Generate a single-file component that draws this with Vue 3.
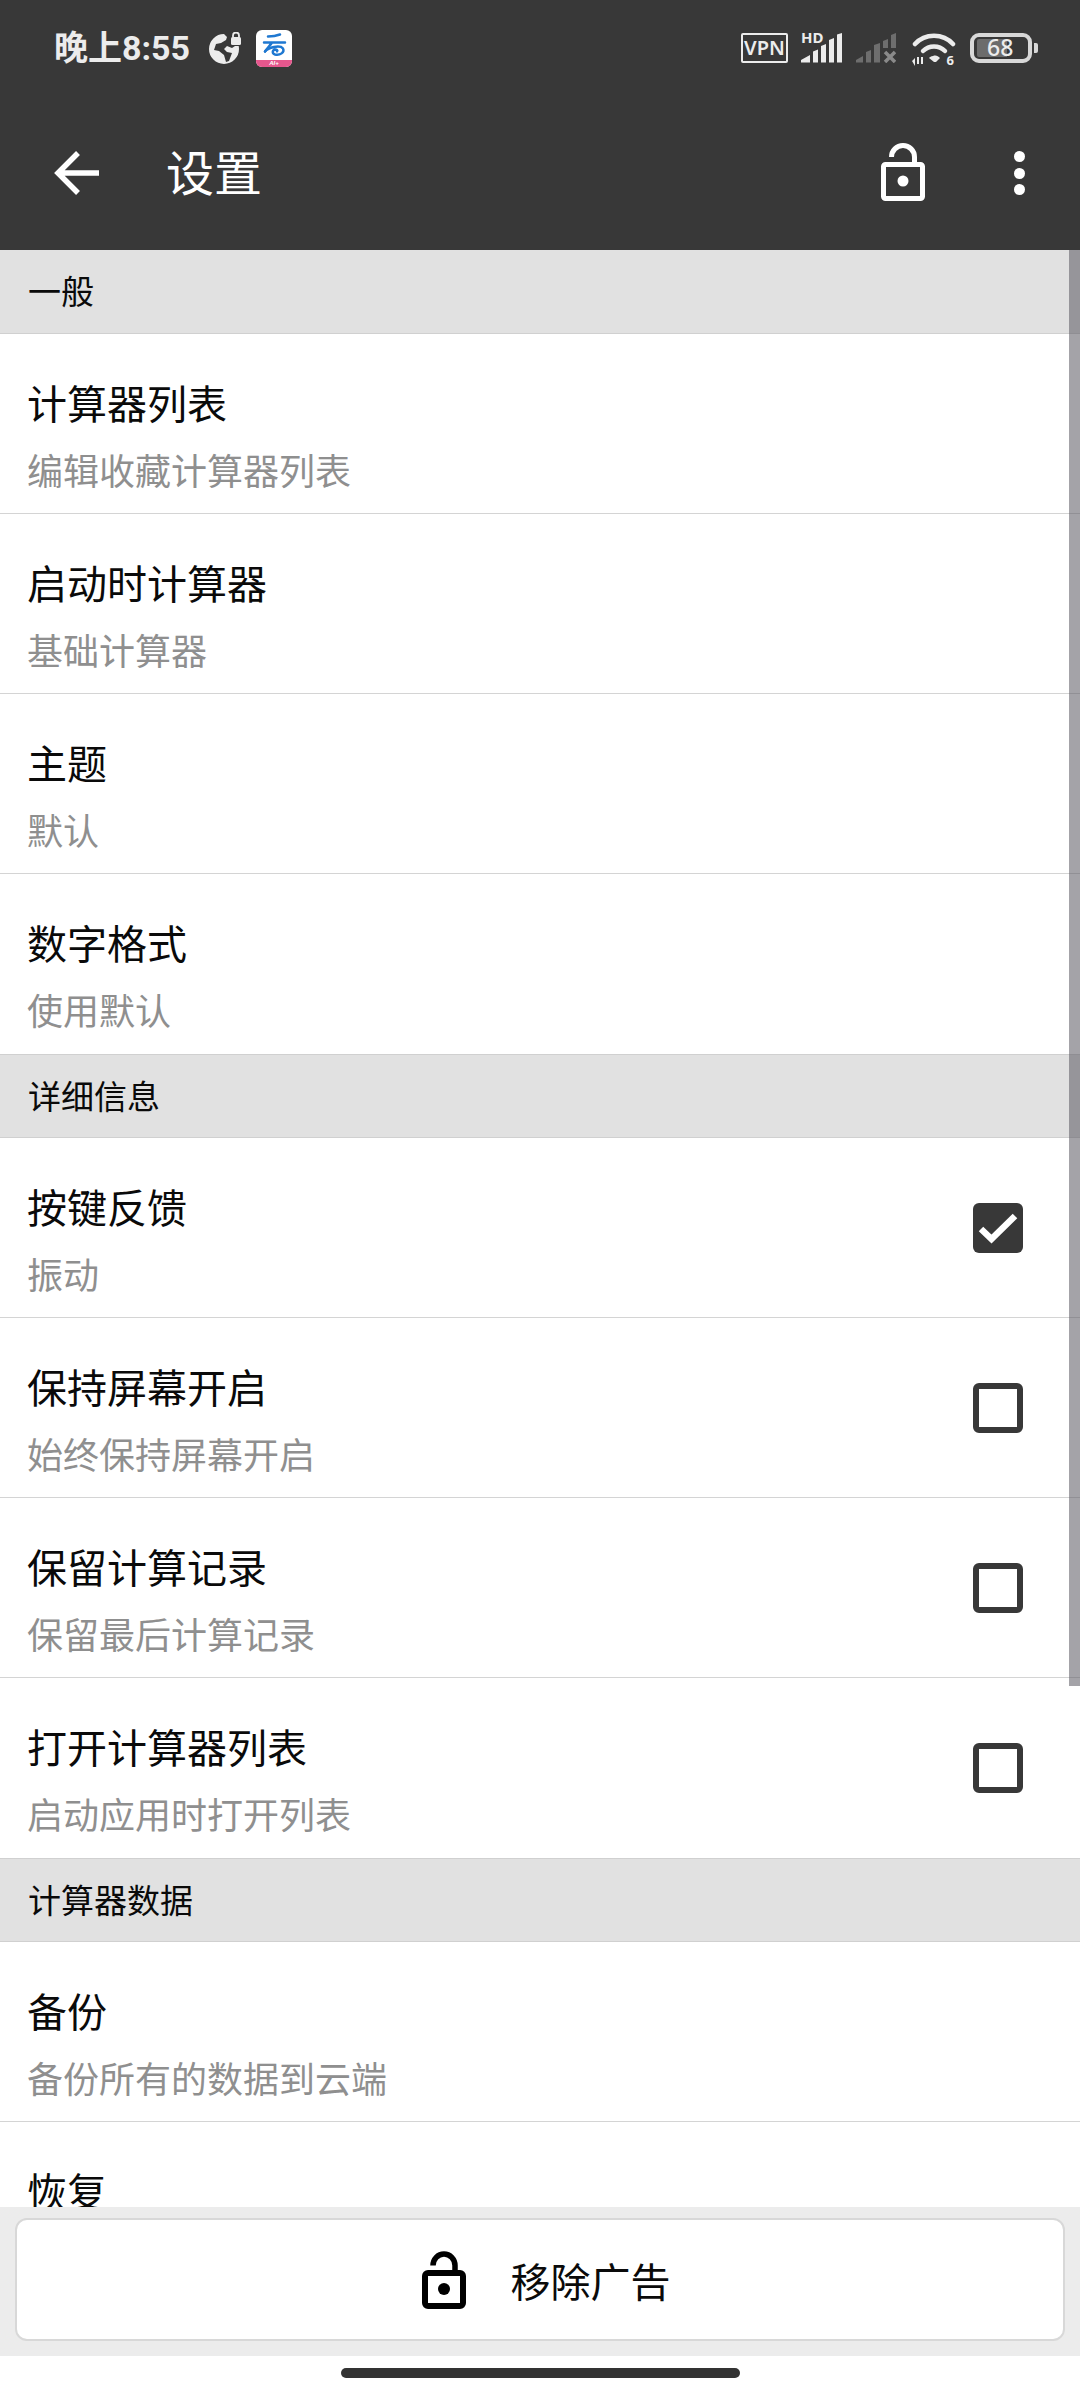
<script setup>
const sections = [
  { title: '一般', rows: [
    { t: '计算器列表', s: '编辑收藏计算器列表' },
    { t: '启动时计算器', s: '基础计算器' },
    { t: '主题', s: '默认' },
    { t: '数字格式', s: '使用默认' },
  ]},
  { title: '详细信息', rows: [
    { t: '按键反馈', s: '振动', c: 'on' },
    { t: '保持屏幕开启', s: '始终保持屏幕开启', c: 'off' },
    { t: '保留计算记录', s: '保留最后计算记录', c: 'off' },
    { t: '打开计算器列表', s: '启动应用时打开列表', c: 'off' },
  ]},
  { title: '计算器数据', rows: [
    { t: '备份', s: '备份所有的数据到云端' },
    { t: '恢复' },
  ]},
]
</script>

<template>
  <div class="page">
    <header class="top">
      <div class="status">
        <span class="time">晚上8:55</span>
        <svg class="globe" width="33" height="32" viewBox="0 0 33 32">
          <path fill="#ececec" d="M15 2a15 15 0 1 0 15 15c0-1-.1-2-.3-3H26l-3 2-5-2-3 3 3 3 5 1-3 8-3 1-2-7-5-4-5-1 2-6 5-1 5-3 1-3z"/>
          <rect x="22" y="5" width="10" height="8" rx="1.5" fill="#ececec"/>
          <path d="M24 5V3.500a3 3 0 0 1 6 0V5" fill="none" stroke="#ececec" stroke-width="1.800"/>
        </svg>
        <div class="appicon">
          <svg width="36" height="30" viewBox="0 0 36 30">
            <path d="M12 6.500c4 0 8-.5 12-2M8 12.500h21M16 12.500c-2 3-5 6-7 9" fill="none" stroke="#1f78d1" stroke-width="2.500" stroke-linecap="round"/>
            <path d="M9 21.500c3-4 15-7 18-3 2 4-3 7-8 6-3-1-3-4 0-5 2 0 3 1 2 2" fill="none" stroke="#1f78d1" stroke-width="2.400" stroke-linecap="round"/>
          </svg>
          <span class="ai">AI+</span>
        </div>
        <span class="spacer"></span>
        <span class="vpn">VPN</span>
        <div class="sig">
          <span class="hd">HD</span>
          <svg width="42" height="30" viewBox="0 0 42 30">
            <path fill="#ececec" d="M1 29.500V27l9-5v7.500zM13 29.500V18.500l5-2v13zM21 29.500V13l5-2v18.500zM29 29.500V7l5-2v24.500zM37 29.500V1.500l5-1.500v29.500z"/>
          </svg>
        </div>
        <svg class="sig2" width="40" height="30" viewBox="0 0 40 30">
          <path fill="#6e6e6e" d="M0 29.500V27l7-4v6.500zM10 29.500V19l5-2v12.500zM18 29.500V12l6-2v19.500zM27 15V8l5-2v9zM35 15V2l5-2v15z"/>
          <path d="M29 19l10 10M39 19L29 29" stroke="#8a8a8a" stroke-width="3.500"/>
        </svg>
        <div class="wifi">
          <svg width="44" height="34" viewBox="0 0 44 34">
            <g fill="none" stroke="#ececec" stroke-width="4.500" stroke-linecap="round">
              <path d="M3 11C13 0 31 0 41 11"/>
              <path d="M11 18c6-6 16-6 22 0"/>
            </g>
            <path fill="#ececec" d="M21 23c3-1 5 0 7 2l-4 4h-2l-5-4c1-1 2-2 4-2z"/>
            <path fill="#ececec" d="M0 28l3-3v8zM5 24h2v7H5zM9 24h2v7H9z"/>
          </svg>
          <span class="wifi6">6</span>
        </div>
        <div class="batt">
          <span class="fill"></span>
          <span class="num">68</span>
        </div>
        <span class="nub"></span>
      </div>
      <div class="bar">
        <svg class="back" width="48" height="46" viewBox="0 0 48 46">
          <path d="M45 23H5M24 3L4 23l20 20" fill="none" stroke="#fff" stroke-width="5.500"/>
        </svg>
        <span class="title">设置</span>
        <span class="spacer"></span>
        <svg class="lock" width="44" height="60" viewBox="0 0 44 60">
          <path d="M10.500 14a11.500 11.500 0 0 1 23 0v7" fill="none" stroke="#fff" stroke-width="5"/>
          <rect x="2.500" y="21.500" width="39" height="34" rx="2" fill="none" stroke="#fff" stroke-width="5"/>
          <circle cx="22" cy="38" r="5.500" fill="#fff"/>
        </svg>
        <div class="dots"><i></i><i></i><i></i></div>
      </div>
    </header>

    <main class="list">
      <section v-for="sec in sections" :key="sec.title">
        <h2 class="sec">{{ sec.title }}</h2>
        <div v-for="r in sec.rows" :key="r.t" class="row">
          <div class="txt">
            <div class="t">{{ r.t }}</div>
            <div v-if="r.s" class="s">{{ r.s }}</div>
          </div>
          <span v-if="r.c === 'on'" class="cb on">
            <svg width="50" height="50" viewBox="0 0 50 50"><path d="M8 26l10.500 10L42 13" fill="none" stroke="#fff" stroke-width="6.500"/></svg>
          </span>
          <span v-else-if="r.c === 'off'" class="cb"></span>
        </div>
      </section>
      <div class="scroll"></div>
    </main>

    <div class="ad">
      <button class="adbtn">
        <svg width="44" height="58" viewBox="0 0 44 58">
          <path d="M11 14.500a11 11.500 0 0 1 22 0V22" fill="none" stroke="#000" stroke-width="5.500"/>
          <rect x="3" y="22" width="38" height="33" rx="3" fill="none" stroke="#000" stroke-width="6"/>
          <circle cx="22" cy="38" r="6" fill="#000"/>
        </svg>
        <span>移除广告</span>
      </button>
    </div>
    <div class="nav"><span class="pill"></span></div>
  </div>
</template>

<style scoped>
.page {
  width: 1080px;
  height: 2400px;
  display: flex;
  flex-direction: column;
  background: #fff;
  overflow: hidden;
  font-family: "Noto Sans CJK SC", "Noto Sans", sans-serif;
}
.top { height: 250px; background: #383838; flex: none; }
.status {
  height: 96px;
  display: flex;
  align-items: center;
  padding: 0 42px 0 54px;
  color: #ececec;
}
.spacer { flex: 1; }
.time { font-size: 34px; font-weight: 700; line-height: 96px; font-family: Roboto, "Noto Sans CJK SC", sans-serif; width: 136px; white-space: nowrap; }
.globe { margin-left: 19px; }
.appicon {
  margin-left: 14px;
  width: 36px;
  height: 37px;
  border-radius: 6px;
  background: #fff;
  overflow: hidden;
  display: flex;
  flex-direction: column;
}
.appicon svg { flex: none; }
.ai {
  height: 7px;
  background: #e5578d;
  color: #fff;
  font: italic 700 6px/7px "Liberation Sans", sans-serif;
  text-align: center;
}
.vpn {
  box-sizing: border-box;
  width: 47px;
  height: 30px;
  border: 2.500px solid #ececec;
  border-radius: 2px;
  font: 600 20px/25px "Noto Sans", sans-serif;
  text-align: center;
  letter-spacing: 0;
}
.sig { position: relative; width: 42px; height: 30px; margin-left: 12px; }
.sig svg { display: block; }
.hd {
  position: absolute;
  left: 1px;
  top: -3px;
  font: 700 15px/15px "Noto Sans", sans-serif;
  color: #ececec;
}
.sig2 { margin-left: 14px; }
.wifi { position: relative; margin: 4px 0 0 16px; width: 44px; height: 34px; }
.wifi svg { display: block; }
.wifi6 { position: absolute; right: 2px; bottom: 0; font: 700 13px/14px "Noto Sans", sans-serif; }
.batt {
  position: relative;
  box-sizing: border-box;
  margin-left: 14px;
  width: 62px;
  height: 30px;
  border: 4.500px solid #d8d8d8;
  border-radius: 9px;
}
.fill { position: absolute; left: 3px; top: 2px; bottom: 2px; width: 30px; background: #6c6c6c; border-radius: 2px 0 0 2px; }
.num { position: absolute; left: 13px; top: 0; font: 500 23px/21px "Noto Sans", sans-serif; color: #ececec; }
.nub { width: 4px; height: 10px; margin-left: 2px; background: #d8d8d8; border-radius: 0 2px 2px 0; }

.bar { height: 154px; display: flex; align-items: center; padding: 0 55.500px 0 54px; }
.title { margin-left: 64px; margin-top: -6px; font-size: 48px; line-height: 60px; color: #fff; }
.dots { display: flex; flex-direction: column; gap: 5.500px; margin-left: 88.500px; }
.dots i { width: 11px; height: 11px; border-radius: 50%; background: #fff; display: block; }

.list { position: relative; flex: 1; min-height: 0; overflow: hidden; }
.scroll { position: absolute; right: 0; top: 0; width: 11px; height: 1436px; background: rgba(90, 88, 96, .55); }
.sec {
  box-sizing: border-box;
  margin: 0;
  height: 84px;
  padding-left: 28px;
  background: #e1e1e1;
  border-bottom: 1px solid #d0d0d0;
  font-size: 33px;
  font-weight: 400;
  line-height: 81px;
  color: #0a0a0a;
}
section + section .sec { border-top: 1px solid #d0d0d0; line-height: 80px; }
.row {
  box-sizing: border-box;
  height: 180px;
  display: flex;
  align-items: flex-start;
  padding: 38px 57px 0 27px;
  border-bottom: 1px solid #d4d4d4;
}
section:nth-child(1) .row:last-child,
section:nth-child(2) .row:last-child { border-bottom: 0; }
.txt { flex: 1; }
.t { font-size: 40px; line-height: 60px; color: #0a0a0a; }
.s { font-size: 36px; line-height: 52px; margin-top: 11px; color: #8f8f8f; }
.cb {
  box-sizing: border-box;
  width: 50px;
  height: 50px;
  margin-top: 27px;
  border: 6px solid #383838;
  border-radius: 6px;
  display: block;
}
.cb svg { display: block; }
.cb.on { background: #383838; border: 0; }

.ad {
  flex: none;
  box-sizing: border-box;
  height: 149px;
  padding: 11px 15px 15px;
  background: #ececec;
}
.adbtn {
  box-sizing: border-box;
  width: 100%;
  height: 123px;
  margin: 0;
  background: #fff;
  border: 2px solid #d8d8d8;
  border-radius: 12px;
  display: flex;
  align-items: center;
  justify-content: center;
  gap: 45px;
  padding: 0 0 0 12px;
  font-family: inherit;
  font-size: 40px;
  color: #0a0a0a;
}
.adbtn span { line-height: 60px; }
.nav { flex: none; height: 44px; display: flex; justify-content: center; padding-top: 12px; box-sizing: border-box; }
.pill { width: 399px; height: 10px; border-radius: 5px; background: #333; }
</style>
